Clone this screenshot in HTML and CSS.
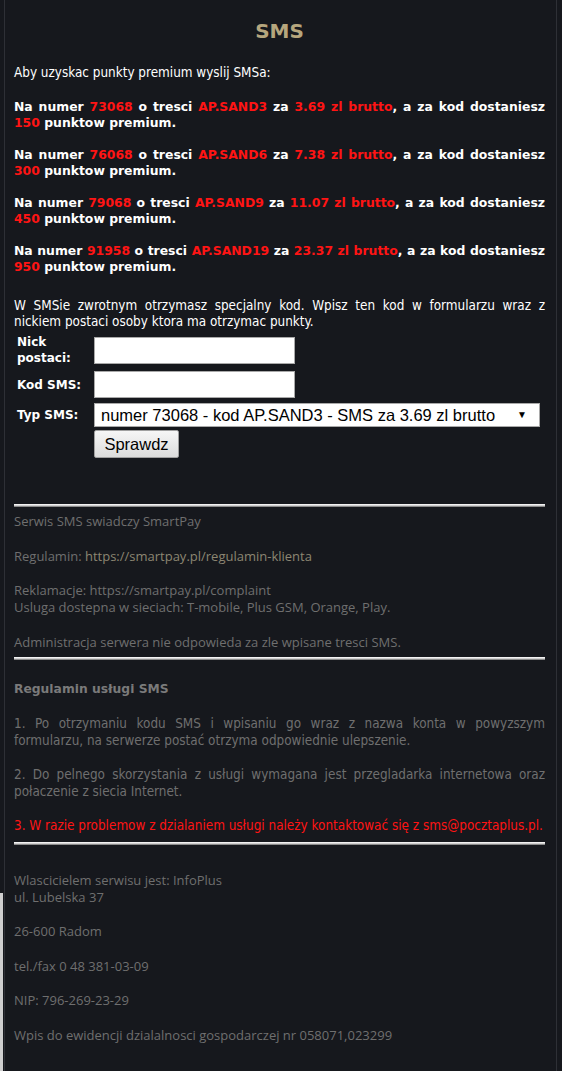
FILE: index.html
```html
<!DOCTYPE html>
<html lang="pl">
<head>
<meta charset="utf-8">
<title>SMS</title>
<link rel="stylesheet" href="styles.css">
</head>
<body>
<div class="page">
  <div class="panel">
    <h1 class="title">SMS</h1>
    <p class="intro">Aby uzyskac punkty premium wyslij SMSa:</p>

    <p class="offer"><span class="jl">Na numer <span class="red">73068</span> o tresci <span class="red">AP.SAND3</span> za <span class="red">3.69 zl brutto</span>, a za kod dostaniesz</span> <span class="red">150</span> punktow premium.</p>
    <p class="offer"><span class="jl">Na numer <span class="red">76068</span> o tresci <span class="red">AP.SAND6</span> za <span class="red">7.38 zl brutto</span>, a za kod dostaniesz</span> <span class="red">300</span> punktow premium.</p>
    <p class="offer"><span class="jl">Na numer <span class="red">79068</span> o tresci <span class="red">AP.SAND9</span> za <span class="red">11.07 zl brutto</span>, a za kod dostaniesz</span> <span class="red">450</span> punktow premium.</p>
    <p class="offer"><span class="jl">Na numer <span class="red">91958</span> o tresci <span class="red">AP.SAND19</span> za <span class="red">23.37 zl brutto</span>, a za kod dostaniesz</span> <span class="red">950</span> punktow premium.</p>

    <p class="info"><span class="jl">W SMSie zwrotnym otrzymasz specjalny kod. Wpisz ten kod w formularzu wraz z</span> nickiem postaci osoby ktora ma otrzymac punkty.</p>

    <form class="form">
      <label class="lbl" for="nick">Nick<br>postaci:</label>
      <input class="txt" id="nick" type="text">
      <label class="lbl" for="kod">Kod SMS:</label>
      <input class="txt" id="kod" type="text">
      <label class="lbl" for="typ">Typ SMS:</label>
      <div class="select" id="typ">
        <span>numer 73068 - kod AP.SAND3 - SMS za 3.69 zl brutto</span>
        <span class="arrow">&#9660;</span>
      </div>
      <span></span>
      <div class="btn-cell"><button class="btn" type="button">Sprawdz</button></div>
    </form>

    <hr class="rule rule-first">

    <div class="foot service">
      <p>Serwis SMS swiadczy SmartPay</p>
      <p>Regulamin: <span class="link">https://smartpay.pl/regulamin-klienta</span></p>
      <p>Reklamacje: https://smartpay.pl/complaint<br>Usluga dostepna w sieciach: T-mobile, Plus GSM, Orange, Play.</p>
      <p>Administracja serwera nie odpowieda za zle wpisane tresci SMS.</p>
    </div>

    <hr class="rule">

    <div class="terms">
      <p class="terms-head">Regulamin usługi SMS</p>
      <p><span class="jl">1. Po otrzymaniu kodu SMS i wpisaniu go wraz z nazwa konta w powyzszym</span> formularzu, na serwerze postać otrzyma odpowiednie ulepszenie.</p>
      <p><span class="jl">2. Do pelnego skorzystania z usługi wymagana jest przegladarka internetowa oraz</span> połaczenie z siecia Internet.</p>
      <p class="terms-red">3. W razie problemow z dzialaniem usługi należy kontaktować się z sms@pocztaplus.pl.</p>
    </div>

    <hr class="rule">

    <div class="foot owner">
      <p>Wlascicielem serwisu jest: InfoPlus<br>ul. Lubelska 37</p>
      <p>26-600 Radom</p>
      <p>tel./fax 0 48 381-03-09</p>
      <p>NIP: 796-269-23-29</p>
      <p>Wpis do ewidencji dzialalnosci gospodarczej nr 058071,023299</p>
    </div>
  </div>
</div>
</body>
</html>
```

FILE: styles.css
```css
html, body {
  margin: 0;
  padding: 0;
  background: #16181d;
}
.page {
  min-height: 1071px;
  background:
    linear-gradient(#cfcfcf, #cfcfcf) 0 893px / 3px 178px no-repeat,
    #16181d;
  padding: 0 5px 0 4px;
}
.panel {
  min-height: 1071px;
  box-sizing: border-box;
  border-left: 1px solid #2e3036;
  border-right: 1px solid #2e3036;
  padding: 20px 11px 20px 9px;
  font-family: "DejaVu Sans Condensed", "DejaVu Sans", sans-serif;
  font-size: 13.4px;
  line-height: 16px;
  color: #ffffff;
}
p { margin: 0; }
.jl {
  display: block;
  text-align: justify;
  text-align-last: justify;
  white-space: nowrap;
}
.title {
  margin: 0 0 22px;
  text-align: center;
  font-family: "DejaVu Sans", sans-serif;
  font-size: 20px;
  line-height: 23px;
  font-weight: bold;
  color: #b6a67d;
}
.intro { margin-bottom: 18px; }
.offer {
  font-family: "DejaVu Sans", sans-serif;
  font-size: 12.4px;
  font-weight: bold;
  margin-bottom: 16px;
}
.red { color: #ff1414; }
.info { margin-top: 23px; }
.form {
  display: grid;
  grid-template-columns: 77px 1fr;
  align-items: center;
  row-gap: 5px;
  margin-top: 4px;
  padding-left: 3px;
}
.lbl {
  font-family: "DejaVu Sans", sans-serif;
  font-size: 12px;
  font-weight: bold;
  line-height: 16px;
}
.txt {
  box-sizing: border-box;
  width: 201px;
  height: 27px;
  margin: 0;
  border: 1px solid #a9a9a9;
  background: #fff;
}
.select {
  box-sizing: border-box;
  height: 24px;
  width: 446px;
  background: #fff;
  border: 1px solid #a9a9a9;
  color: #000;
  font-family: "Liberation Sans", Arial, sans-serif;
  font-size: 16.5px;
  line-height: 22px;
  padding: 0 12px 0 6px;
  display: flex;
  justify-content: space-between;
  align-items: center;
  white-space: nowrap;
}
.arrow { font-size: 10px; }
.btn-cell { margin-top: -2px; }
.btn {
  display: block;
  width: 85px;
  height: 28px;
  margin: 0;
  padding: 0;
  font-family: "Liberation Sans", Arial, sans-serif;
  font-size: 16.5px;
  color: #000;
  background: linear-gradient(#f6f6f6, #dcdcdc);
  border: 1px solid #a0a0a0;
  border-radius: 2px;
}
.rule {
  margin: 0;
  height: 1px;
  border: none;
  border-top: 1px solid #f2f2f2;
  border-bottom: 1px solid #8a8a8a;
  background: #d0d0d0;
  box-sizing: content-box;
}
.rule-first { margin-top: 46px; }
.foot, .terms {
  color: #6f6f6f;
  line-height: 17px;
}
.foot {
  font-family: "Open Sans", sans-serif;
  font-size: 13px;
}
.foot p { margin-bottom: 17.5px; }
.service { padding-top: 6px; }
.service p:last-child { margin-bottom: 6px; }
.link { color: #8c8672; }
.terms { padding-top: 21px; }
.terms p { margin-bottom: 17px; }
.terms .terms-head {
  font-family: "DejaVu Sans", sans-serif;
  font-size: 12.3px;
  font-weight: bold;
  color: #7a7a7a;
}
.terms .terms-red {
  color: #ff1414;
  white-space: nowrap;
  margin-bottom: 8px;
}
.owner { padding-top: 27px; }
.owner p:last-child { margin-bottom: 0; }
```
